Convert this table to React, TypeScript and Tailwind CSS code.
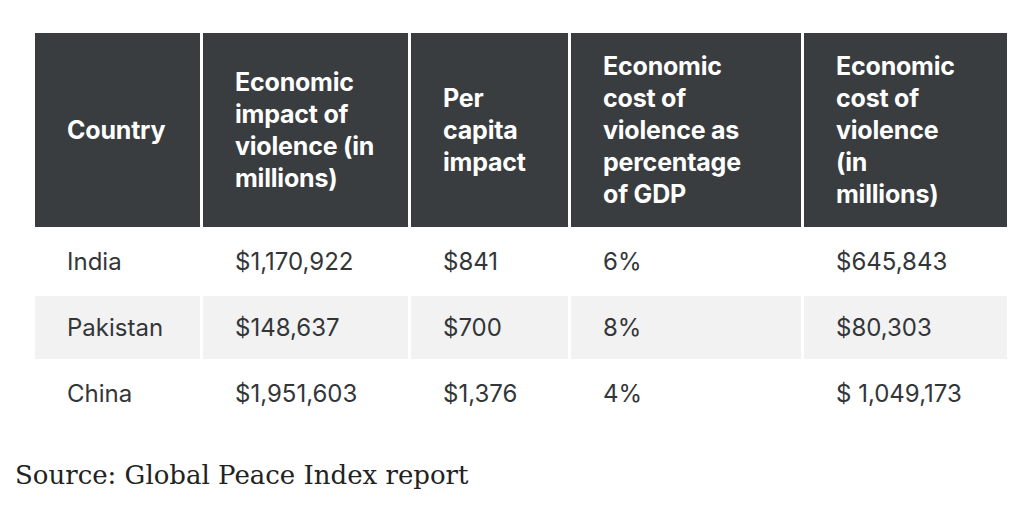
import React from 'react';

const headers: string[][] = [
  ['Country'],
  ['Economic', 'impact of', 'violence (in', 'millions)'],
  ['Per', 'capita', 'impact'],
  ['Economic', 'cost of', 'violence as', 'percentage', 'of GDP'],
  ['Economic', 'cost of', 'violence', '(in', 'millions)'],
];

const rows: string[][] = [
  ['India', '$1,170,922', '$841', '6%', '$645,843'],
  ['Pakistan', '$148,637', '$700', '8%', '$80,303'],
  ['China', '$1,951,603', '$1,376', '4%', '$ 1,049,173'],
];

const App: React.FC = () => {
  return (
    <div className="w-[1024px] h-[518px] bg-white pt-[33px] overflow-hidden" style={{ fontFamily: 'Inter, "Noto Sans", sans-serif' }}>
      <div className="ml-[35px] grid grid-cols-[165px_205px_157px_230px_203px] gap-[3px]">
        {headers.map((lines, i) => (
          <div key={i} className="bg-[#3a3d40] h-[194px] flex items-center px-8 text-white font-bold text-[25px] leading-[32px] tracking-[-0.2px]">
            <div>
              {lines.map((l, j) => (
                <div key={j}>{l}</div>
              ))}
            </div>
          </div>
        ))}
        {rows.map((row, r) =>
          row.map((cell, c) => (
            <div
              key={`${r}-${c}`}
              className={`h-[63px] flex items-center px-8 text-[24px] text-[#333639] ${r === 1 ? 'bg-[#f2f2f2]' : 'bg-white'}`}
            >
              {cell}
            </div>
          ))
        )}
      </div>
      <p className="ml-[15px] mt-[31px] text-[26px] text-[#222]" style={{ fontFamily: '"DejaVu Serif", serif' }}>
        Source: Global Peace Index report
      </p>
    </div>
  );
};

export default App;
